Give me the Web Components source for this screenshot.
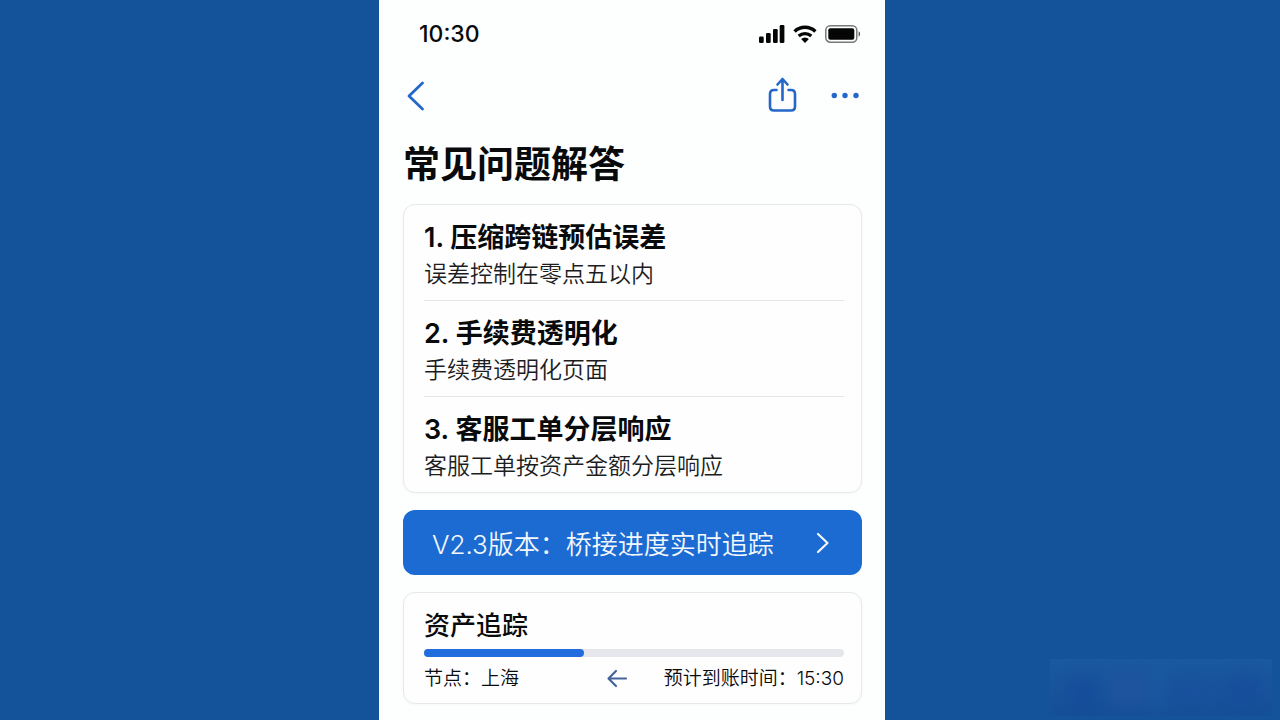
<!DOCTYPE html>
<html lang="zh-CN">
<head>
<meta charset="UTF-8">
<meta name="viewport" content="width=device-width, initial-scale=1">
<title>常见问题解答</title>
<style>
    body {
        margin: 0;
        padding-right: 16px;
        background-color: #145299;
        color: #090a0c;
        font-family: Inter, "Noto Sans CJK SC", sans-serif;
    }
</style>
</head>
<body>
<faq-page>
    <status-bar slot="top" time="10:30"></status-bar>
    <nav-header slot="top">常见问题解答</nav-header>
    <faq-card>
        <faq-item><span slot="question">1. 压缩跨链预估误差</span>误差控制在零点五以内</faq-item>
        <faq-item><span slot="question">2. 手续费透明化</span>手续费透明化页面</faq-item>
        <faq-item><span slot="question">3. 客服工单分层响应</span>客服工单按资产金额分层响应</faq-item>
    </faq-card>
    <version-link href="#progress">V2.3版本：桥接进度实时追踪</version-link>
    <faq-card id="progress">
        <asset-tracker value="38">
            <span slot="title">资产追踪</span>
            <span slot="node">节点：上海</span>
            <span slot="eta">预计到账时间：15:30</span>
        </asset-tracker>
    </faq-card>
</faq-page>
<corner-mark></corner-mark>

<script>
class FaqPage extends HTMLElement {
    constructor() {
        super();
        this.attachShadow({ mode: 'open' });
        this.shadowRoot.innerHTML = `
            <style>
                :host {
                    display: block;
                    box-sizing: border-box;
                    max-width: 506px;
                    min-height: 100vh;
                    margin: 0 auto;
                    padding-bottom: 16px;
                    background-color: #fdfefe;
                }
                main {
                    display: flex;
                    flex-direction: column;
                    gap: 17px;
                    padding: 0 23px 0 24px;
                }
            </style>
            <slot name="top"></slot>
            <main><slot></slot></main>
        `;
    }
}

class StatusBar extends HTMLElement {
    constructor() {
        super();
        this.attachShadow({ mode: 'open' });
        this.shadowRoot.innerHTML = `
            <style>
                :host {
                    display: flex;
                    justify-content: space-between;
                    align-items: center;
                    height: 68px;
                    padding: 0 24px 0 40px;
                }
                time {
                    font-size: 23px;
                    font-weight: 500;
                }
                .icons {
                    display: flex;
                    align-items: center;
                    gap: 8px;
                }
                svg {
                    display: block;
                }
            </style>
            <time>${this.getAttribute('time')}</time>
            <div class="icons">
                <svg width="26" height="20" viewBox="0 0 26 20" fill="#050505" aria-hidden="true">
                    <rect x="0" y="12.500" width="4.700" height="6.500" rx="1.300"/>
                    <rect x="7" y="9" width="4.700" height="10" rx="1.300"/>
                    <rect x="14" y="5" width="4.700" height="14" rx="1.300"/>
                    <rect x="20.700" y="1" width="4.700" height="18" rx="1.300"/>
                </svg>
                <svg width="24" height="20" viewBox="0 0 24 20" fill="none" stroke="#050505" aria-hidden="true">
                    <path d="M1.600 7.400a15 15 0 0 1 20.800 0" stroke-width="3.400"/>
                    <path d="M5.700 12a9.300 9.300 0 0 1 12.600 0" stroke-width="3.200"/>
                    <path d="M12 19l-3.900-3.900a5.600 5.600 0 0 1 7.800 0z" fill="#050505" stroke="none"/>
                </svg>
                <svg width="36" height="20" viewBox="0 0 36 20" aria-hidden="true">
                    <rect x=".8" y="1.800" width="31" height="16.400" rx="4.500" fill="none" stroke="#77797b" stroke-width="1.500"/>
                    <rect x="3.300" y="4.300" width="26" height="11.400" rx="2" fill="#050505"/>
                    <path d="M33.600 7.300c2 .9 2 4.500 0 5.400z" fill="#55585b"/>
                </svg>
            </div>
        `;
    }
}

class NavHeader extends HTMLElement {
    constructor() {
        super();
        this.attachShadow({ mode: 'open' });
        this.shadowRoot.innerHTML = `
            <style>
                :host {
                    display: block;
                }
                nav {
                    display: flex;
                    align-items: center;
                    justify-content: space-between;
                    height: 56px;
                    padding: 0 25px 0 24px;
                }
                .actions {
                    display: flex;
                    gap: 33px;
                }
                button {
                    padding: 0;
                    border: none;
                    background: none;
                    color: #2467c9;
                    cursor: pointer;
                }
                svg {
                    display: block;
                }
                h1 {
                    margin: 0;
                    padding: 13px 24px 11px;
                    font-size: 37px;
                    line-height: 56px;
                    font-weight: 700;
                }
            </style>
            <nav>
                <button aria-label="返回">
                    <svg width="24" height="36" viewBox="0 0 24 36" fill="none" stroke="currentColor" stroke-width="2.800" stroke-linecap="round" stroke-linejoin="round">
                        <path d="M19.500 5L6 18l13.500 13"/>
                    </svg>
                </button>
                <div class="actions">
                    <button aria-label="分享">
                        <svg width="30" height="38" viewBox="0 0 30 38" fill="none" stroke="currentColor" stroke-width="2.600" stroke-linecap="round" stroke-linejoin="round">
                            <path d="M9.500 13H7q-4 0-4 4v12.500q0 4 4 4h17q4 0 4-4V17q0-4-4-4h-2.500"/>
                            <path d="M15.500 23V2.500M10.500 7.500l5-5.500 5 5.500"/>
                        </svg>
                    </button>
                    <button aria-label="更多">
                        <svg width="30" height="38" viewBox="0 0 30 38" fill="currentColor">
                            <circle cx="4.300" cy="18.500" r="2.700"/>
                            <circle cx="15" cy="18.500" r="2.700"/>
                            <circle cx="26" cy="18.500" r="2.700"/>
                        </svg>
                    </button>
                </div>
            </nav>
            <h1><slot></slot></h1>
        `;
    }
}

class FaqCard extends HTMLElement {
    constructor() {
        super();
        this.attachShadow({ mode: 'open' });
        this.shadowRoot.innerHTML = `
            <style>
                :host {
                    display: block;
                    padding: 0 17px 0 20px;
                    border: 1px solid #e6e8ea;
                    border-radius: 12px;
                    background-color: #fefefe;
                    box-shadow: 0 1px 3px rgba(0, 0, 0, 0.03);
                }
            </style>
            <slot></slot>
        `;
    }
}

class FaqItem extends HTMLElement {
    constructor() {
        super();
        this.attachShadow({ mode: 'open' });
        this.shadowRoot.innerHTML = `
            <style>
                :host {
                    display: block;
                    padding: 14px 0 9px;
                    border-bottom: 1px solid #e3e6e7;
                }
                :host(:last-of-type) {
                    border-bottom: none;
                }
                h2, p {
                    margin: 0;
                }
                h2 {
                    font-size: 27px;
                    line-height: 38px;
                    font-weight: 600;
                }
                p {
                    font-size: 23px;
                    line-height: 34px;
                    font-weight: 350;
                    color: #1c1d1f;
                }
            </style>
            <h2><slot name="question"></slot></h2>
            <p><slot></slot></p>
        `;
    }
}

class VersionLink extends HTMLElement {
    constructor() {
        super();
        this.attachShadow({ mode: 'open' });
        this.shadowRoot.innerHTML = `
            <style>
                :host {
                    display: block;
                }
                a {
                    display: flex;
                    align-items: center;
                    justify-content: space-between;
                    height: 65px;
                    padding: 0 29px;
                    border-radius: 12px;
                    background-color: #1b6bd2;
                    color: #f4f8fd;
                    font-size: 26px;
                    font-weight: 350;
                    text-decoration: none;
                }
                a:hover {
                    background-color: #1762c4;
                }
                svg {
                    flex: none;
                }
            </style>
            <a href="${this.getAttribute('href')}">
                <slot></slot>
                <svg width="20" height="26" viewBox="0 0 20 26" fill="none" stroke="currentColor" stroke-width="2.200" stroke-linecap="round" stroke-linejoin="round" aria-hidden="true">
                    <path d="M5 4l9.500 9L5 22"/>
                </svg>
            </a>
        `;
    }
}

class AssetTracker extends HTMLElement {
    constructor() {
        super();
        this.attachShadow({ mode: 'open' });
        this.shadowRoot.innerHTML = `
            <style>
                :host {
                    display: block;
                    padding: 13px 0 10px;
                }
                h2 {
                    margin: 0;
                    font-size: 26px;
                    line-height: 40px;
                    font-weight: 500;
                }
                .track {
                    height: 8px;
                    margin: 3px 0 8px;
                    border-radius: 4px;
                    background-color: #e5e7ed;
                }
                .bar {
                    width: ${this.getAttribute('value')}%;
                    height: 100%;
                    border-radius: 4px;
                    background-color: #216ddd;
                }
                .info {
                    display: flex;
                    align-items: center;
                    gap: 36px;
                    font-size: 19px;
                    line-height: 28px;
                    font-weight: 350;
                }
                .info svg {
                    margin-left: auto;
                }
            </style>
            <h2><slot name="title"></slot></h2>
            <div class="track" role="progressbar" aria-label="资产追踪" aria-valuemin="0" aria-valuemax="100" aria-valuenow="${this.getAttribute('value')}">
                <div class="bar"></div>
            </div>
            <div class="info">
                <slot name="node"></slot>
                <svg width="22" height="20" viewBox="0 0 22 20" fill="none" stroke="#45639b" stroke-width="2.200" stroke-linecap="round" stroke-linejoin="round" aria-hidden="true">
                    <path d="M20 9.500H3M10 2L2.500 9.500l7.500 7.500"/>
                </svg>
                <slot name="eta"></slot>
            </div>
        `;
    }
}

// faint smudge in the corner of the backdrop
class CornerMark extends HTMLElement {
    constructor() {
        super();
        this.attachShadow({ mode: 'open' });
        this.shadowRoot.innerHTML = `
            <style>
                :host {
                    position: fixed;
                    right: 8px;
                    bottom: 4px;
                    width: 222px;
                    height: 57px;
                    overflow: hidden;
                    pointer-events: none;
                    background: linear-gradient(#1a589f, #154f98);
                }
                svg {
                    display: block;
                    filter: blur(7px);
                    opacity: 0.6;
                }
            </style>
            <svg width="222" height="57" viewBox="0 0 222 57" aria-hidden="true">
                <rect x="18" y="16" width="30" height="36" fill="#164a9b"/>
                <rect x="60" y="14" width="34" height="34" fill="#24549f"/>
                <rect x="100" y="6" width="14" height="46" fill="#1c5ba5"/>
                <rect x="120" y="20" width="48" height="26" fill="#194f9e"/>
                <rect x="178" y="16" width="32" height="28" fill="#174a9e"/>
            </svg>
        `;
    }
}

customElements.define('faq-page', FaqPage);
customElements.define('status-bar', StatusBar);
customElements.define('nav-header', NavHeader);
customElements.define('faq-card', FaqCard);
customElements.define('faq-item', FaqItem);
customElements.define('version-link', VersionLink);
customElements.define('asset-tracker', AssetTracker);
customElements.define('corner-mark', CornerMark);
</script>
</body>
</html>
